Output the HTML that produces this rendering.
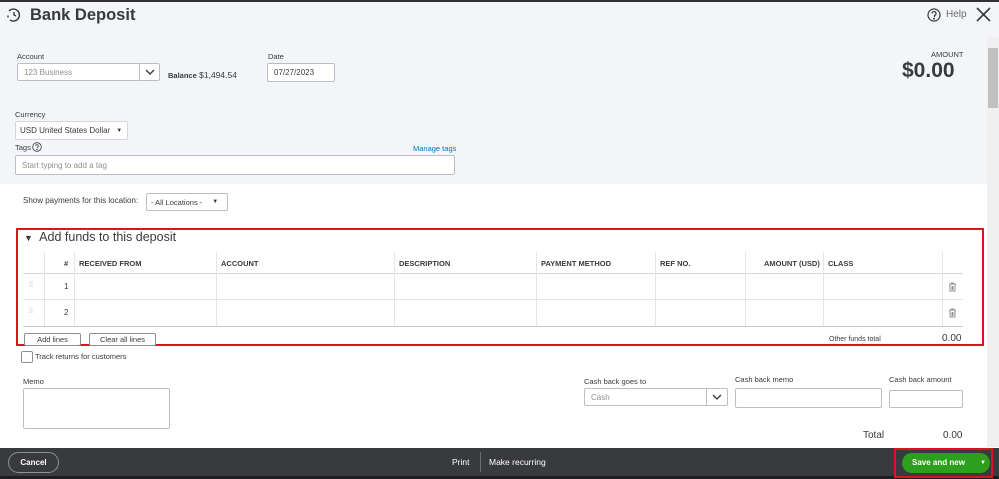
<!DOCTYPE html>
<html><head><meta charset="utf-8"><style>
*{box-sizing:border-box;margin:0;padding:0}
body{width:999px;height:479px;overflow:hidden;font-family:"Liberation Sans",Arial,sans-serif;color:#393a3d;background:#fff;position:relative;font-size:8px}
.a{position:absolute}
.hdr{left:0;top:0;width:999px;height:184px;background:#f4f5f8;border-top:2px solid #333}
.lbl{font-size:7.5px;color:#393a3d}
.inp{background:#fff;border:1px solid #babec5;border-radius:2px;font-size:8px;color:#8d9096;padding-left:6px;display:flex;align-items:center}
.th{font-size:7.5px;font-weight:bold;color:#393a3d}
.vl{width:1px;background:#e3e5e8}
.hl{height:1px;background:#d4d7dc}
.btn{border:1px solid #8d9096;border-radius:2px;background:#fff;font-size:7.5px;text-align:center;line-height:11px;color:#393a3d}
</style></head><body>
<div class="a hdr"></div>
<svg class="a" style="left:6px;top:7px" width="16" height="16" viewBox="0 0 16 16" fill="none" stroke="#393a3d" stroke-width="1.4"><path d="M3 4 A6 6 0 1 1 4 13"/><path d="M8 5v3l2 1"/><path d="M2 8.5v2"/></svg>
<div class="a" style="left:30px;top:6px;font-size:16.5px;font-weight:bold;color:#393a3d">Bank Deposit</div>
<svg class="a" style="left:927px;top:8px" width="14" height="14" viewBox="0 0 14 14" fill="none" stroke="#393a3d" stroke-width="1.2"><circle cx="7" cy="7" r="6"/><path d="M5 5.5a2 2 0 1 1 2.5 2V9"/><circle cx="7" cy="10.6" r=".4" fill="#393a3d"/></svg>
<div class="a" style="left:946px;top:9px;font-size:10px;color:#6b6c72">Help</div>
<svg class="a" style="left:976px;top:7px" width="15" height="15" viewBox="0 0 15 15" stroke="#393a3d" stroke-width="1.6"><path d="M1 1l13 13M14 1L1 14"/></svg>
<div class="a" style="left:987px;top:37px;width:12px;height:410px;background:#f0f0f0"></div>
<div class="a" style="left:988px;top:48px;width:10px;height:60px;background:#c1c1c1"></div>

<div class="a lbl" style="left:17px;top:52px">Account</div>
<div class="a inp" style="left:17px;top:63px;width:124px;height:18px">123 Business</div>
<div class="a inp" style="left:139px;top:63px;width:21px;height:18px;padding:0;justify-content:center"><svg width="10" height="6" viewBox="0 0 10 6" fill="none" stroke="#393a3d" stroke-width="1.4"><path d="M1 1l4 4 4-4"/></svg></div>
<div class="a" style="left:168px;top:70px;font-size:8.5px"><b style="font-size:7.5px">Balance</b> $1,494.54</div>
<div class="a lbl" style="left:268px;top:52px">Date</div>
<div class="a inp" style="left:267px;top:63px;width:68px;height:19px;color:#393a3d">07/27/2023</div>
<div class="a" style="left:931px;top:50px;font-size:7.5px;color:#393a3d">AMOUNT</div>
<div class="a" style="left:902px;top:59px;font-size:21px;font-weight:bold;color:#393a3d">$0.00</div>

<div class="a lbl" style="left:15px;top:110px">Currency</div>
<div class="a inp" style="left:15px;top:121px;width:113px;height:19px;color:#393a3d;font-size:8px;padding-left:4px;border-color:#d4d7dc">USD United States Dollar<span style="margin-left:6px;font-size:6px">▼</span></div>
<div class="a lbl" style="left:15px;top:143px">Tags</div>
<svg class="a" style="left:32px;top:142px" width="10" height="10" viewBox="0 0 10 10" fill="none" stroke="#393a3d" stroke-width=".8"><circle cx="5" cy="5" r="4.3"/><path d="M3.7 3.9a1.3 1.3 0 1 1 1.6 1.3v.8"/><circle cx="5" cy="7.4" r=".3"/></svg>
<div class="a" style="left:413px;top:144px;font-size:7.5px;color:#0077c5">Manage tags</div>
<div class="a inp" style="left:15px;top:155px;width:440px;height:20px;font-size:8px">Start typing to add a tag</div>

<div class="a" style="left:23px;top:196px;font-size:8px">Show payments for this location:</div>
<div class="a inp" style="left:146px;top:193px;width:82px;height:18px;color:#393a3d;font-size:7.5px;padding-left:4px">- All Locations -<span style="margin-left:10px;font-size:6px">▼</span></div>

<div class="a" style="left:16px;top:228px;width:968px;height:118px;border:2px solid #e0121b"></div>
<div class="a" style="left:24px;top:230px;font-size:12.5px;color:#393a3d"><span style="font-size:9px">▼</span>&nbsp; Add funds to this deposit</div>
<div class="a hl" style="left:23px;top:273px;width:940px"></div>
<div class="a hl" style="left:23px;top:299px;width:940px;background:#e3e5e8"></div>
<div class="a hl" style="left:23px;top:326px;width:940px;background:#c8cbd0"></div>
<div class="a vl" style="left:44px;top:252px;height:74px"></div>
<div class="a vl" style="left:74px;top:252px;height:74px"></div>
<div class="a vl" style="left:216px;top:252px;height:74px"></div>
<div class="a vl" style="left:394px;top:252px;height:74px"></div>
<div class="a vl" style="left:536px;top:252px;height:74px"></div>
<div class="a vl" style="left:655px;top:252px;height:74px"></div>
<div class="a vl" style="left:745px;top:252px;height:74px"></div>
<div class="a vl" style="left:823px;top:252px;height:74px"></div>
<div class="a vl" style="left:942px;top:252px;height:74px"></div>
<div class="a th" style="left:64px;top:259px">#</div>
<div class="a th" style="left:79px;top:259px">RECEIVED FROM</div>
<div class="a th" style="left:221px;top:259px">ACCOUNT</div>
<div class="a th" style="left:399px;top:259px">DESCRIPTION</div>
<div class="a th" style="left:541px;top:259px">PAYMENT METHOD</div>
<div class="a th" style="left:660px;top:259px">REF NO.</div>
<div class="a th" style="left:764px;top:259px">AMOUNT (USD)</div>
<div class="a th" style="left:828px;top:259px">CLASS</div>
<div class="a" style="left:29px;top:282px;font-size:7px;color:#aaa">⁞⁞</div>
<div class="a" style="left:29px;top:308px;font-size:7px;color:#aaa">⁞⁞</div>
<div class="a" style="left:64px;top:282px;font-size:8px">1</div>
<div class="a" style="left:64px;top:308px;font-size:8px">2</div>
<svg class="a" style="left:948px;top:282px" width="9" height="10" viewBox="0 0 9 10" fill="none" stroke="#8d9096" stroke-width="1"><path d="M1 2h7M3 1h3M2 2v7h5V2M4 4v4M5 4v4"/></svg>
<svg class="a" style="left:948px;top:308px" width="9" height="10" viewBox="0 0 9 10" fill="none" stroke="#8d9096" stroke-width="1"><path d="M1 2h7M3 1h3M2 2v7h5V2M4 4v4M5 4v4"/></svg>
<div class="a btn" style="left:24px;top:333px;width:57px;height:13px">Add lines</div>
<div class="a btn" style="left:89px;top:333px;width:67px;height:13px">Clear all lines</div>
<div class="a" style="left:829px;top:336px;font-size:7px">Other funds total</div>
<div class="a" style="left:942px;top:333px;font-size:10px">0.00</div>

<div class="a" style="left:21px;top:351px;width:12px;height:12px;border:1px solid #8d9096;border-radius:2px;background:#fff"></div>
<div class="a" style="left:35px;top:352px;font-size:7.5px">Track returns for customers</div>
<div class="a lbl" style="left:23px;top:377px">Memo</div>
<div class="a" style="left:23px;top:388px;width:147px;height:41px;border:1px solid #babec5;border-radius:2px"></div>
<div class="a lbl" style="left:584px;top:377px">Cash back goes to</div>
<div class="a inp" style="left:584px;top:388px;width:144px;height:18px">Cash</div>
<div class="a" style="left:706px;top:388px;width:1px;height:18px;background:#babec5"></div>
<svg class="a" style="left:712px;top:394px" width="10" height="6" viewBox="0 0 10 6" fill="none" stroke="#393a3d" stroke-width="1.3"><path d="M1 1l4 4 4-4"/></svg>
<div class="a lbl" style="left:735px;top:375px">Cash back memo</div>
<div class="a inp" style="left:735px;top:388px;width:147px;height:20px"></div>
<div class="a lbl" style="left:889px;top:375px">Cash back amount</div>
<div class="a inp" style="left:889px;top:390px;width:74px;height:18px"></div>
<div class="a" style="left:863px;top:430px;font-size:10px">Total</div>
<div class="a" style="left:943px;top:430px;font-size:10px">0.00</div>

<div class="a" style="left:0;top:448px;width:999px;height:31px;background:#393a3d"></div>
<div class="a" style="left:0;top:476px;width:999px;height:3px;background:#1e1e20"></div>
<div class="a" style="left:8px;top:452px;width:51px;height:21px;border:1px solid #8d9096;border-radius:11px;color:#fff;font-weight:bold;font-size:8px;text-align:center;line-height:19px">Cancel</div>
<div class="a" style="left:452px;top:457px;font-size:8.5px;color:#fff">Print</div>
<div class="a" style="left:480px;top:452px;width:1px;height:20px;background:#6b6c72"></div>
<div class="a" style="left:489px;top:457px;font-size:8.5px;color:#fff">Make recurring</div>
<div class="a" style="left:894px;top:448px;width:99px;height:30px;border:2px solid #e0121b"></div>
<div class="a" style="left:902px;top:453px;width:88px;height:20px;background:#2ca01c;border-radius:10px;color:#fff;font-weight:bold;font-size:8px;line-height:20px;padding-left:10px">Save and new<span style="position:absolute;left:78px;font-size:6px">▼</span></div>
</body></html>
